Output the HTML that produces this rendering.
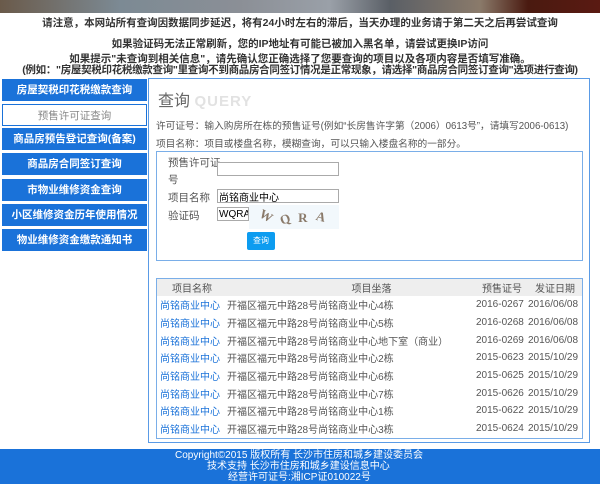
<!DOCTYPE html>
<html><head><meta charset="utf-8"><style>
*{margin:0;padding:0;box-sizing:border-box}
body{width:600px;height:484px;background:#fff;font-family:"Liberation Sans","Noto Sans CJK SC",sans-serif;position:relative;overflow:hidden;color:#555}
.hdr{position:absolute;left:0;top:0;width:600px;height:13px;background:linear-gradient(90deg,#6a5a4a 0%,#7c8a94 20%,#8b8f96 40%,#9aa0a8 55%,#5a5f66 65%,#8a7a6a 80%,#4a1a10 88%,#5a1a12 100%)}
.n{position:absolute;left:0;width:600px;text-align:center;font-weight:bold;font-size:10.5px;color:#333;white-space:nowrap;line-height:12px}
.sb{position:absolute;left:2px;width:145px;height:22px;background:#1a72d9;color:#fff;font-weight:bold;font-size:10.5px;text-align:center;line-height:22px;white-space:nowrap}
.sb.w{background:#fff;color:#888;border:1px solid #1a72d9;font-weight:normal}
.main{position:absolute;left:148px;top:78px;width:442px;height:365px;border:1px solid #5a9be6}
.t{position:absolute;font-size:9.7px;color:#555;white-space:nowrap}
.box{position:absolute;border:1px solid #7aaee8}
input{position:absolute;border:1px solid #aaa;height:14px;font-size:10px;padding-left:1px;color:#000;font-family:inherit}
table{border-collapse:collapse;width:100%;font-size:10px}
th{background:#eee;font-weight:normal;height:17px;color:#555}
td{height:17.7px;white-space:nowrap;color:#555}
td.a{color:#1a72d9;padding-left:3px}
.ft{position:absolute;left:0;top:449px;width:600px;height:35px;background:#1a72d9;color:#fff;font-size:10px;line-height:11.5px}
</style></head><body>
<div class="hdr"></div>
<div class="n" style="top:17px">请注意，本网站所有查询因数据同步延迟，将有24小时左右的滞后，当天办理的业务请于第二天之后再尝试查询</div>
<div class="n" style="top:38px">如果验证码无法正常刷新，您的IP地址有可能已被加入黑名单，请尝试更换IP访问</div>
<div class="n" style="top:53px">如果提示"未查询到相关信息"，请先确认您正确选择了您要查询的项目以及各项内容是否填写准确。</div>
<div class="n" style="top:64px;letter-spacing:-0.3px">(例如："房屋契税印花税缴款查询"里查询不到商品房合同签订情况是正常现象，请选择"商品房合同签订查询"选项进行查询)</div>
<div class="sb" style="top:79px">房屋契税印花税缴款查询</div>
<div class="sb w" style="top:104px">预售许可证查询</div>
<div class="sb" style="top:128px">商品房预告登记查询(备案)</div>
<div class="sb" style="top:153px">商品房合同签订查询</div>
<div class="sb" style="top:179px">市物业维修资金查询</div>
<div class="sb" style="top:204px">小区维修资金历年使用情况</div>
<div class="sb" style="top:229px">物业维修资金缴款通知书</div>
<div class="main"></div>
<div class="t" style="left:158px;top:87px;font-size:16px;color:#666">查询 <span style="font-weight:bold;color:#e2e2e2;font-size:15px;letter-spacing:1px">QUERY</span></div>
<div class="t" style="left:156px;top:118px">许可证号：输入购房所在栋的预售证号(例如“长房售许字第（2006）0613号”，请填写2006-0613)</div>
<div class="t" style="left:156px;top:136px">项目名称：项目或楼盘名称，模糊查询，可以只输入楼盘名称的一部分。</div>
<div class="box" style="left:156px;top:151px;width:427px;height:110px"></div>
<div class="t" style="left:168px;top:155px;font-size:10.5px">预售许可证</div>
<div class="t" style="left:168px;top:172px;font-size:10.5px">号</div>
<input style="left:217px;top:162px;width:122px" value="">
<div class="t" style="left:168px;top:190px;font-size:10.5px">项目名称</div>
<input style="left:217px;top:189px;width:122px" value="尚铭商业中心">
<div class="t" style="left:168px;top:208px;font-size:10.5px">验证码</div>
<input style="left:217px;top:207px;width:32px" value="WQRA">
<div style="position:absolute;left:249px;top:205px;width:90px;height:24px;background:#f2f8fc;color:#8a7a6a;font-family:'Liberation Serif',serif;font-weight:bold;font-size:13px;letter-spacing:8px;padding-left:10px;line-height:26px"><span style="display:inline-block;transform:rotate(30deg)">W</span><span style="display:inline-block;transform:rotate(-20deg)">Q</span>R<span style="display:inline-block;transform:rotate(15deg)">A</span></div>
<div style="position:absolute;left:247px;top:232px;width:28px;height:18px;background:#0c9cf0;border-radius:2px;color:#fff;font-size:8px;text-align:center;line-height:18px">查询</div>
<div class="box" style="left:156px;top:278px;width:427px;height:161px">
<table>
<tr><th style="width:70px">项目名称</th><th style="text-align:center;padding-left:40px">项目坐落</th><th style="width:52px">预售证号</th><th style="width:54px">发证日期</th></tr>
<tr><td class="a">尚铭商业中心</td><td>开福区福元中路28号尚铭商业中心4栋</td><td>2016-0267</td><td>2016/06/08</td></tr>
<tr><td class="a">尚铭商业中心</td><td>开福区福元中路28号尚铭商业中心5栋</td><td>2016-0268</td><td>2016/06/08</td></tr>
<tr><td class="a">尚铭商业中心</td><td>开福区福元中路28号尚铭商业中心地下室（商业）</td><td>2016-0269</td><td>2016/06/08</td></tr>
<tr><td class="a">尚铭商业中心</td><td>开福区福元中路28号尚铭商业中心2栋</td><td>2015-0623</td><td>2015/10/29</td></tr>
<tr><td class="a">尚铭商业中心</td><td>开福区福元中路28号尚铭商业中心6栋</td><td>2015-0625</td><td>2015/10/29</td></tr>
<tr><td class="a">尚铭商业中心</td><td>开福区福元中路28号尚铭商业中心7栋</td><td>2015-0626</td><td>2015/10/29</td></tr>
<tr><td class="a">尚铭商业中心</td><td>开福区福元中路28号尚铭商业中心1栋</td><td>2015-0622</td><td>2015/10/29</td></tr>
<tr><td class="a">尚铭商业中心</td><td>开福区福元中路28号尚铭商业中心3栋</td><td>2015-0624</td><td>2015/10/29</td></tr>
</table></div>
<div class="ft">
<div style="position:absolute;left:175px;top:1px;white-space:nowrap">Copyright©2015 版权所有 长沙市住房和城乡建设委员会</div>
<div style="position:absolute;left:207px;top:12px;white-space:nowrap">技术支持 长沙市住房和城乡建设信息中心</div>
<div style="position:absolute;left:228px;top:23px;white-space:nowrap">经营许可证号:湘ICP证010022号</div>
</div>
</body></html>
